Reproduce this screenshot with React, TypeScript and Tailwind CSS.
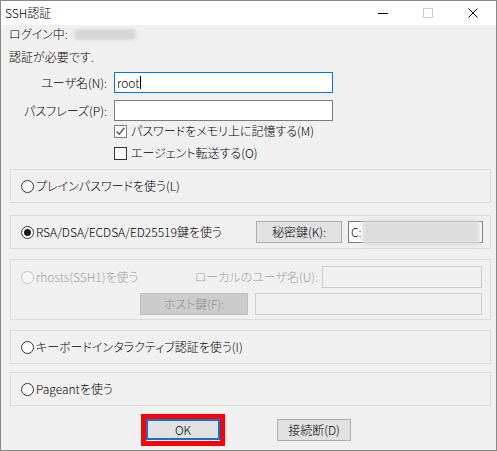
import React from "react";

const font = {
  fontFamily: '"Noto Sans CJK JP", "Liberation Sans", sans-serif',
};

function Radio({ checked, disabled }: { checked?: boolean; disabled?: boolean }) {
  return (
    <span
      className={
        "flex h-[13px] w-[13px] shrink-0 items-center justify-center rounded-full border " +
        (disabled ? "border-[#c4c4c4] bg-[#f7f7f7]" : "border-[#333333] bg-white")
      }
    >
      {checked && <span className="h-[7px] w-[7px] rounded-full bg-[#1a1a1a]" />}
    </span>
  );
}

function Checkbox({ checked }: { checked?: boolean }) {
  return (
    <span
      className={
        "flex h-[13px] w-[13px] shrink-0 items-center justify-center border bg-white " +
        (checked ? "border-[#808080]" : "border-[#333333]")
      }
    >
      {checked && (
        <svg width="11" height="11" viewBox="0 0 11 11">
          <path d="M1.5 5.5 L4.2 8.2 L9.5 1.8" fill="none" stroke="#5a5a5a" strokeWidth="1.4" />
        </svg>
      )}
    </span>
  );
}

function Group({ className, children }: { className: string; children: React.ReactNode }) {
  return (
    <div className={"ml-[1px] w-[481px] border border-[#dcdcdc] " + className}>{children}</div>
  );
}

export default function App() {
  return (
    <div
      className="flex h-[451px] w-[497px] flex-col border border-[#888888] bg-[#f0f0f0] text-[12px] leading-none font-light text-black [font-feature-settings:'palt']"
      style={font}
    >
      {/* title bar */}
      <div className="flex h-[24px] items-center bg-white">
        <span className="ml-[4px]">SSH認証</span>
        <div className="ml-auto flex items-center">
          <span className="mr-[35px] h-[1px] w-[10px] bg-black" />
          <span className="mr-[35px] h-[10px] w-[10px] border border-[#cccccc]" />
          <svg width="10" height="10" viewBox="0 0 10 10" className="mr-[18px]">
            <path d="M0.5 0.5 L9.5 9.5 M9.5 0.5 L0.5 9.5" stroke="#000" strokeWidth="1" />
          </svg>
        </div>
      </div>

      {/* body */}
      <div className="flex flex-col pl-[8px]">
        <div className="mt-[1px] flex h-[16px] items-center">
          <span>ログイン中:</span>
          <span className="ml-[6px] h-[11px] w-[62px] rounded-sm bg-[#d6d6d6] blur-[1.5px]" />
        </div>
        <div className="mt-[7px] flex h-[16px] items-center">認証が必要です.</div>

        <div className="mt-[7px] flex items-center">
          <span className="w-[98px] text-right">ユーザ名(N):</span>
          <div className="ml-[7px] flex h-[21px] w-[219px] items-center border border-[#0078d7] bg-white pl-[2px]">
            root<span className="ml-[1px] h-[13px] w-[1px] bg-black" />
          </div>
        </div>
        <div className="mt-[7px] flex items-center">
          <span className="w-[98px] text-right">パスフレーズ(P):</span>
          <div className="ml-[7px] h-[21px] w-[219px] border border-[#7a7a7a] bg-white" />
        </div>

        <div className="mt-[2px] ml-[105px] flex h-[16px] items-center gap-[4px]">
          <Checkbox checked />
          <span>パスワードをメモリ上に記憶する(M)</span>
        </div>
        <div className="mt-[6px] ml-[105px] flex h-[16px] items-center gap-[4px]">
          <Checkbox />
          <span>エージェント転送する(O)</span>
        </div>

        <Group className="mt-[8px] flex h-[34px] items-center gap-[2px] pl-[10px]">
          <Radio />
          <span>プレインパスワードを使う(L)</span>
        </Group>

        <Group className="mt-[12px] flex h-[34px] items-center pl-[10px] pr-[7px]">
          <Radio checked />
          <span className="ml-[2px]">RSA/DSA/ECDSA/ED25519鍵を使う</span>
          <button className="ml-auto h-[22px] w-[86px] border border-[#adadad] bg-[#e1e1e1]">
            秘密鍵(K):
          </button>
          <div className="relative ml-[6px] flex h-[22px] w-[135px] items-center border border-[#7a7a7a] bg-white pl-[2px]">
            C:
            <span className="absolute top-[-2px] left-[13px] h-[25px] w-[118px] bg-[#dcdcdc] blur-[2px]" />
          </div>
        </Group>

        <Group className="mt-[10px] flex h-[61px] flex-col pr-[8px] pt-[6px] text-[#a0a0a0]">
          <div className="flex h-[22px] items-center pl-[10px]">
            <Radio disabled />
            <span className="ml-[2px]">rhosts(SSH1)を使う</span>
            <span className="ml-auto mr-[4px]">ローカルのユーザ名(U):</span>
            <div className="h-[22px] w-[160px] border border-[#cccccc] bg-[#f0f0f0]" />
          </div>
          <div className="mt-[5px] flex h-[22px] items-center">
            <button className="ml-[129px] h-[22px] w-[108px] border border-[#bfbfbf] bg-[#cccccc] text-[#8c8c8c]">
              ホスト鍵(F):
            </button>
            <div className="ml-auto h-[22px] w-[227px] border border-[#cccccc] bg-[#f0f0f0]" />
          </div>
        </Group>

        <Group className="mt-[10px] flex h-[34px] items-center gap-[2px] pl-[10px]">
          <Radio />
          <span>キーボードインタラクティブ認証を使う(I)</span>
        </Group>

        <Group className="mt-[8px] flex h-[34px] items-center gap-[2px] pl-[10px]">
          <Radio />
          <span>Pageantを使う</span>
        </Group>

        <div className="mt-[8px] flex items-start">
          <div className="ml-[132px] flex h-[32px] w-[84px] border-[5px] border-[#ff0000]">
            <button className="h-[21px] w-[74px] border-2 border-[#0078d7] bg-[#e1e1e1]">OK</button>
          </div>
          <button className="mt-[5px] ml-[52px] h-[22px] w-[74px] border border-[#adadad] bg-[#e1e1e1]">
            接続断(D)
          </button>
        </div>
      </div>
    </div>
  );
}
